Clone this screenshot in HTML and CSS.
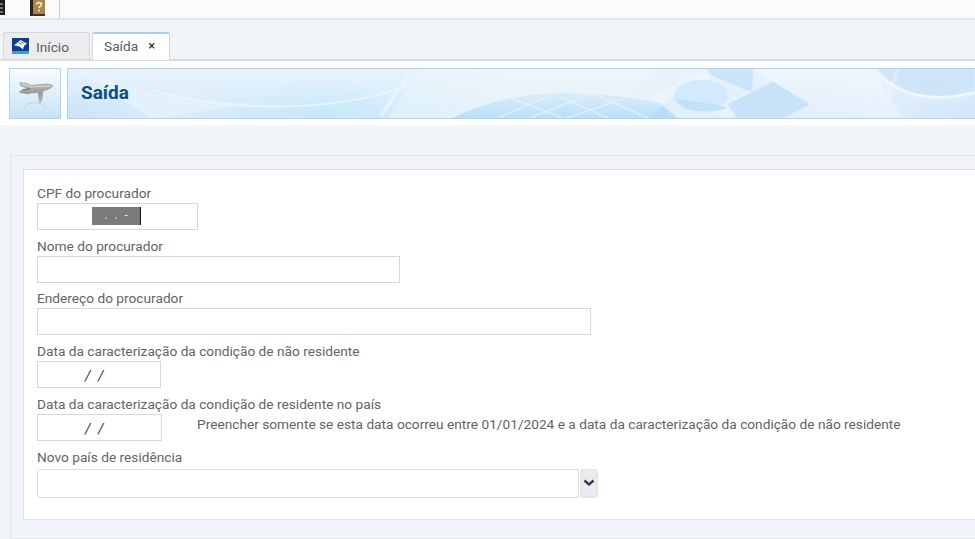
FILE: index.html
```html
<!DOCTYPE html>
<html lang="pt-BR">
<head>
<meta charset="utf-8">
<title>Saída</title>
<link rel="stylesheet" href="styles.css">
</head>
<body>
<header class="toolbar">
  <svg class="tool-cut" width="5" height="15" viewBox="0 0 5 15"><rect width="5" height="15" fill="#1c1c1c"/><path d="M0 4h3M0 8h3M0 12h3" stroke="#c8c8c8"/></svg>
  <svg class="tool-help" width="15" height="16" viewBox="0 0 15 16"><rect x="0" y="0" width="3" height="16" fill="#2a2318"/><rect x="3" y="0" width="12" height="14" fill="#a98650"/><rect x="2" y="14" width="13" height="2" fill="#40341f"/><path d="M6.500 4.500c0-2.500 5-2.500 5 0 0 1.800-2.500 1.800-2.500 3.600M9 9.500v2" fill="none" stroke="#f3e8d2" stroke-width="1.700"/></svg>
  <div class="tool-sep"></div>
</header>
<nav class="tabs">
  <div class="tab tab-home">
    <svg class="home-icon" width="17" height="17" viewBox="0 0 17 17"><rect width="17" height="15" fill="#0c3f88"/><rect y="13" width="17" height="3" fill="#3d9be2"/><path d="M2 7.500L8.500 2 15 5.500 12 8l-1 3.500L7.500 8.500z" fill="#f4f7fb"/><path d="M6.500 4.500l3.500 2M8.500 3.500l3.500 2" stroke="#5f82b5"/></svg>
    <span class="tab-home-text">Início</span>
  </div>
  <div class="tab tab-active">
    <span>Saída</span>
    <span class="tab-close">×</span>
  </div>
</nav>
<section class="title-strip">
  <div class="plane-box">
    <svg width="38" height="30" viewBox="0 0 38 30">
      <defs><linearGradient id="planeFill" x1="0" y1="0" x2="0" y2="1"><stop offset="0" stop-color="#bdbdbb"/><stop offset=".55" stop-color="#9a9a98"/><stop offset="1" stop-color="#b8bcbd"/></linearGradient></defs>
      <path d="M8 29c2-4 6-5 11-5s9 1 11 5" fill="none" stroke="#c3d6e6" stroke-width="1"/>
      <path d="M3 3l7 .5L15 6l15-1.500c4-.4 6.500 .5 7.500 2.500-3 3-6 4.500-10.500 5.200L26.500 20 25 24l-2 0-1-10-6 .3-4 1-8-1.300-1-2 8-2L7 8 4 7z" fill="url(#planeFill)"/>
      <path d="M6 5l9 3 20-1" fill="none" stroke="#d9d9d7" stroke-width="1.200"/>
      <path d="M6 11l8-1.500" stroke="#6f6f6d" stroke-width="1"/>
    </svg>
  </div>
  <div class="banner">
    <svg class="banner-art" width="908" height="50" viewBox="0 0 908 50" preserveAspectRatio="none">
      <defs>
        <filter id="soft"><feGaussianBlur stdDeviation="0.8"/></filter>
        <pattern id="mesh" width="4" height="4" patternUnits="userSpaceOnUse"><path d="M0 4L4 0M0 0l4 4" stroke="#ffffff" stroke-width=".4" opacity=".35"/></pattern>
        <linearGradient id="globeFade" x1="0" y1="0" x2="0" y2="1"><stop offset="0" stop-color="#d8edfb"/><stop offset="1" stop-color="#b4defb"/></linearGradient>
      </defs>
      <g filter="url(#soft)" opacity=".85">
        <path d="M13 2c50 18 110 40 190 30l-110 18H82z" fill="#ecf5fc" opacity=".55"/>
        <path d="M85 22c90 25 190 20 258-6 40-14 70-16 100-16" fill="none" stroke="#eef6fd" stroke-width="2"/>
        <path d="M345 1L313 48" stroke="#f0f7fd" stroke-width="3"/>
        <path d="M352 0h240l-60 50H320z" fill="#edf5fc" opacity=".55"/>
        <path d="M383 50c40-22 90-28 130-26 50 2 100 12 137 26z" fill="url(#globeFade)"/>
        <path d="M383 50c40-22 90-28 130-26 50 2 100 12 137 26" fill="none" stroke="#e9f4fd" stroke-width="2"/>
        <path d="M430 50l55-24M462 50l60-24M500 50l56-20M445 30l50 20M490 27l50 23M530 27l50 23" stroke="#e9f4fd" stroke-width="1.100" fill="none"/>
        <path d="M582 50l25-24 50 24z" fill="#b4d9f8"/>
        <path d="M640 0h46l-1 22-25 12z" fill="#c6e2f8"/>
        <path d="M585 28L634 2l60 26-34 22H610z" fill="#eef7fd" opacity=".75"/>
        <ellipse cx="634" cy="27" rx="27" ry="16" fill="#cfe9fb"/>
        <path d="M608 31c20 2 38 4 52 8-8 4-14 5-26 4-12 0-22-5-26-12z" fill="#bbdff8"/>
        <path d="M660 36l46-23 37 23-27 14h-46z" fill="#c4e1f9"/>
        <path d="M686 0h120l30 50H716l27-14-37-23z" fill="#ffffff" opacity=".28"/>
        <path d="M686 0h120l30 50H716l27-14-37-23z" fill="url(#mesh)"/>
        <path d="M810 0h98v22c-22 7-42 8-62 3-14-4-26-13-36-25z" fill="#cce5f8"/>
        <path d="M853 0h22v26h-22z" fill="#c6e1f8" opacity=".5"/>
        <path d="M806 0c18 20 40 30 70 29 12-1 22-3 32-5" fill="none" stroke="#f3f9fe" stroke-width="2.800"/>
        <path d="M830 1l-15 48" stroke="#eef6fd" stroke-width="1.600"/>
      </g>
    </svg>
    <h1 class="banner-title">Saída</h1>
  </div>
</section>
<main class="content">
  <div class="outer-panel">
    <form class="form-card">
      <div class="field">
        <label class="label">CPF do procurador</label>
        <div class="input input-cpf"><span class="mask">. . -</span><span class="caret"></span></div>
      </div>
      <div class="field">
        <label class="label">Nome do procurador</label>
        <div class="input input-name"></div>
      </div>
      <div class="field">
        <label class="label">Endereço do procurador</label>
        <div class="input input-address"></div>
      </div>
      <div class="field">
        <label class="label">Data da caracterização da condição de não residente</label>
        <div class="input input-date"><span class="date-mask">/ /</span></div>
      </div>
      <div class="field">
        <label class="label">Data da caracterização da condição de residente no país</label>
        <div class="date-row">
          <div class="input input-date input-date-wide"><span class="date-mask">/ /</span></div>
          <span class="hint">Preencher somente se esta data ocorreu entre 01/01/2024 e a data da caracterização da condição de não residente</span>
        </div>
      </div>
      <div class="field">
        <label class="label">Novo país de residência</label>
        <div class="select-row">
          <div class="select-box"></div>
          <div class="select-btn"><svg width="12" height="8" viewBox="0 0 12 8"><path d="M1.500 1.500L6 5.500l4.500-4" fill="none" stroke="#333b48" stroke-width="2.400"/></svg></div>
        </div>
      </div>
    </form>
  </div>
</main>
</body>
</html>
```
FILE: styles.css
```css
* { box-sizing: border-box; }
html, body { margin: 0; padding: 0; }
body {
  width: 975px;
  height: 539px;
  overflow: hidden;
  background: #f1f4f8;
  font-family: Roboto, "Liberation Sans", sans-serif;
  color: #636363;
  font-size: 13.7px;
}
.toolbar {
  height: 20px;
  background: #fafbfb;
  border-bottom: 2px solid #e3e6ea;
  display: flex;
  align-items: flex-start;
}
.tool-cut { flex: none; }
.tool-help { margin-left: 25px; flex: none; }
.tool-sep { width: 1px; height: 18px; background: #c9c9c9; margin-left: 14px; }
.tabs {
  height: 41px;
  padding: 13px 0 0 3px;
  display: flex;
  align-items: flex-end;
  gap: 2px;
  border-bottom: 2px solid #d9dcdf;
  background: #f1f4f8;
}
.tab {
  height: 27px;
  display: flex;
  align-items: center;
  font-size: 13.7px;
}
.tab-home {
  width: 87px;
  padding-left: 8px;
  gap: 7px;
  background: #ececee;
  border: 1px solid #d5d7da;
  border-bottom: 0;
  color: #5b6068;
  border-radius: 3px 3px 0 0;
}
.tab-home-text { padding-top: 2px; }
.home-icon { flex: none; }
.tab-active {
  width: 78px;
  height: 28px;
  margin-bottom: -1px;
  padding: 0 0 3px 11px;
  background: #fff;
  border: 1px solid #d5d7da;
  border-top: 2px solid #a9cdee;
  border-bottom: 0;
  border-radius: 3px 3px 0 0;
  color: #555a60;
  gap: 10px;
}
.tab-close { color: #222; font-size: 13px; font-weight: 400; }
.title-strip {
  height: 64px;
  background: #fff;
  padding: 7px 0 0 9px;
  display: flex;
  gap: 6px;
  align-items: flex-start;
}
.plane-box {
  width: 52px;
  height: 51px;
  flex: none;
  border: 1px solid #aed4f2;
  background: linear-gradient(180deg, #f8fcfe 0%, #c6e2f7 100%);
  display: flex;
  align-items: center;
  justify-content: center;
}
.banner {
  position: relative;
  flex: 1;
  height: 51px;
  overflow: hidden;
  border: 1px solid #aed4f2;
  border-right: 0;
  background:
    linear-gradient(180deg, rgba(235, 243, 251, .95) 0%, rgba(235, 243, 251, 0) 85%),
    linear-gradient(90deg, #cde5f8 0%, #d9ecfa 12%, #c9e8fa 28%, #d0ebfa 36%, #e4f0fa 50%, #e4f0fa 68%, #d8e9f9 80%, #dcecfa 90%, #d3e7f9 100%);
  display: flex;
  align-items: center;
  padding: 0 0 3px 13px;
}
.banner-art { position: absolute; left: 0; top: 0; width: 100%; height: 100%; }
.banner-title {
  position: relative;
  margin: 0;
  font-size: 19px;
  font-weight: 700;
  color: #0e4f7c;
}
.content { padding: 30px 0 0 10px; }
.outer-panel {
  height: 384px;
  border: 1px solid #e4e8ec;
  border-right: 0;
  padding: 13px 0 0 12px;
}
.form-card {
  height: 351px;
  background: #fff;
  border: 1px solid #dfe3e8;
  border-right: 0;
  padding: 14.800px 0 0 13px;
  display: flex;
  flex-direction: column;
}
.field { display: flex; flex-direction: column; height: 52.800px; }
.label { line-height: 16px; height: 18px; }
.input {
  height: 27px;
  background: #fff;
  border: 1px solid #d8d8d8;
  position: relative;
  flex: none;
}
.input-cpf { width: 161px; display: flex; padding-left: 54px; align-items: center; }
.mask {
  width: 48px;
  height: 18px;
  background: #7b7b7b;
  color: #e8e8e8;
  font-size: 12px;
  line-height: 16px;
  text-align: center;
  word-spacing: 4px;
}
.caret { width: 1px; height: 18px; background: #111; }
.input-name { width: 363px; }
.input-address { width: 554px; }
.input-date { width: 124px; line-height: 28px; padding-left: 47px; }
.input-date-wide { width: 125px; height: 27.500px; }
.date-mask { color: #333; font-size: 14px; font-style: italic; word-spacing: 4px; }
.date-row { display: flex; align-items: flex-start; gap: 35px; }
.hint { line-height: 18px; padding-top: 1px; white-space: nowrap; }
.select-row { display: flex; padding-top: 2.200px; }
.select-box {
  width: 542px;
  height: 29px;
  border: 1px solid #dcdcdc;
  border-radius: 3px 0 0 3px;
  background: #fff;
}
.select-btn {
  width: 18px;
  height: 29px;
  margin-left: 1px;
  background: #e9ebef;
  border: 2px solid #e6e6e6;
  border-radius: 4px;
  display: flex;
  align-items: center;
  justify-content: center;
}
```
